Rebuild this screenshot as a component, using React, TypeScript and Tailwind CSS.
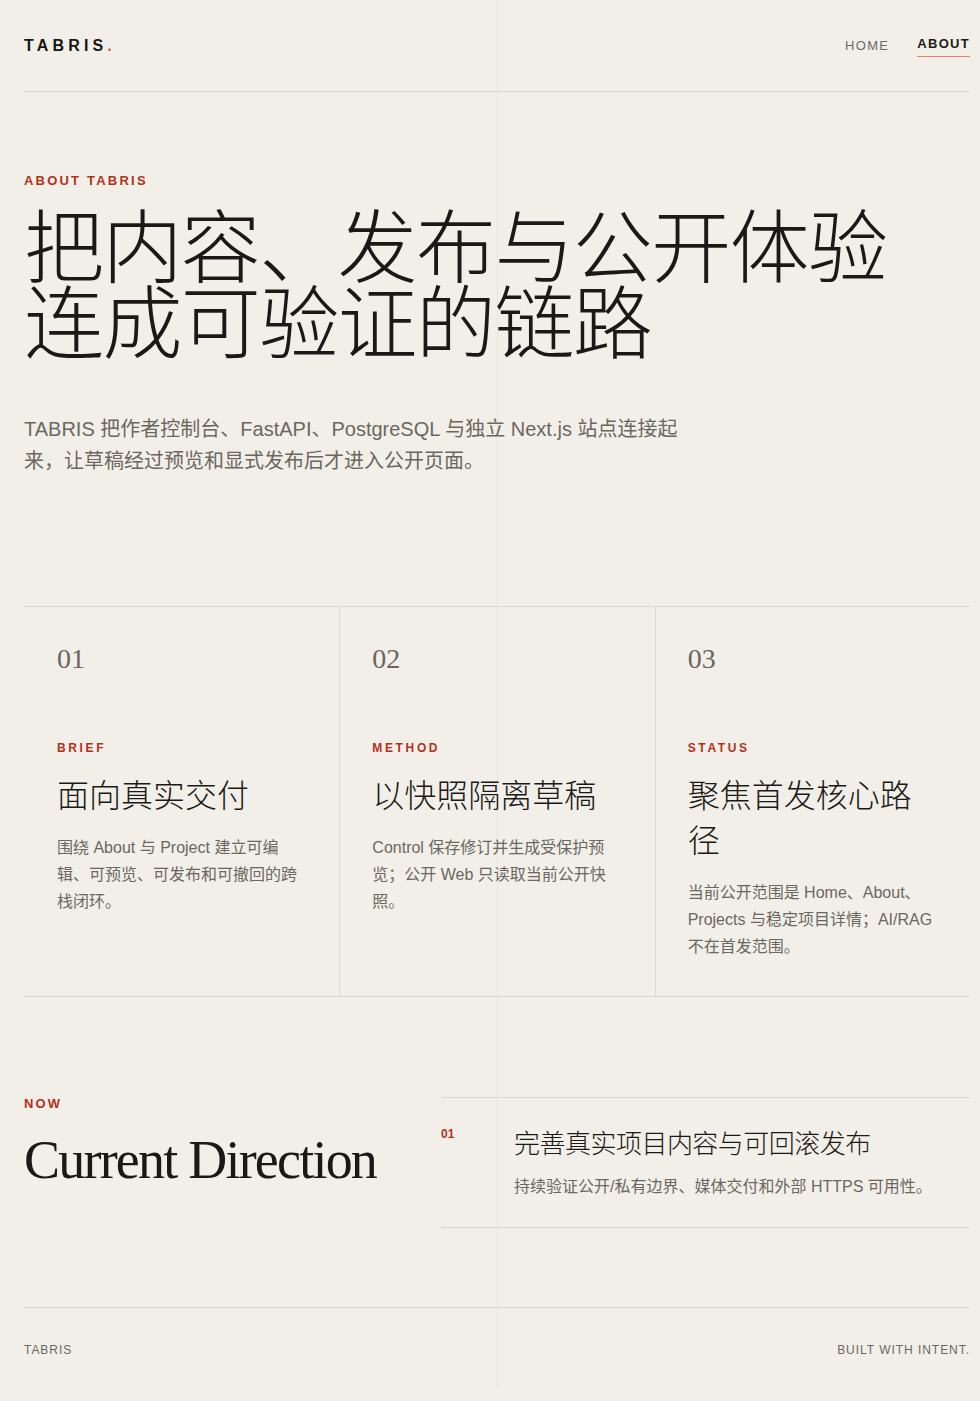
const sans = "font-['Liberation_Sans','Noto_Sans_CJK_SC',sans-serif]";
const serif = "font-['Liberation_Serif','Noto_Sans_CJK_SC',serif]";

type Pillar = { no: string; label: string; title: string; body: string };

const pillars: Pillar[] = [
  {
    no: '01',
    label: 'BRIEF',
    title: '面向真实交付',
    body: '围绕 About 与 Project 建立可编辑、可预览、可发布和可撤回的跨栈闭环。',
  },
  {
    no: '02',
    label: 'METHOD',
    title: '以快照隔离草稿',
    body: 'Control 保存修订并生成受保护预览；公开 Web 只读取当前公开快照。',
  },
  {
    no: '03',
    label: 'STATUS',
    title: '聚焦首发核心路径',
    body: '当前公开范围是 Home、About、Projects 与稳定项目详情；AI/RAG 不在首发范围。',
  },
];

function Header() {
  return (
    <header className="flex h-[92px] items-center justify-between border-b border-[#dcd8d0]">
      <a className="text-[16px] font-bold tracking-[0.26em] text-[#161513]">
        TABRIS<span className="text-[#e4583e]">.</span>
      </a>
      <nav className="flex items-center gap-7 text-[13px] font-medium tracking-[0.1em]">
        <a className="text-[#6d6963]">HOME</a>
        <a className="border-b-[1.5px] border-[#e8836b] pb-[2px] font-semibold text-[#1c1b19]">ABOUT</a>
      </nav>
    </header>
  );
}

function Hero() {
  return (
    <section className="pt-[82px]">
      <p className="text-[13px] leading-none font-bold tracking-[0.17em] text-[#b3311c]">ABOUT TABRIS</p>
      <h1 className={`${serif} mt-[24px] text-[80px] leading-[76px] font-light tracking-[-0.02em] text-[#1a1917]`}>
        把内容、发布与公开体验
        <br />
        连成可验证的链路
      </h1>
      <p className="mt-[50px] max-w-[664px] text-[20px] leading-[32px] text-[#6b6760]">
        TABRIS 把作者控制台、FastAPI、PostgreSQL 与独立 Next.js 站点连接起来，让草稿经过预览和显式发布后才进入公开页面。
      </p>
    </section>
  );
}

function Pillars() {
  return (
    <section className="mt-[129px] grid grid-cols-3 border-y border-[#dcd8d0]">
      {pillars.map((p, i) => (
        <div
          key={p.no}
          className={`border-l px-8 pt-[38px] pb-[36px] ${i === 0 ? 'border-transparent' : 'border-[#dcd8d0]'}`}
        >
          <div className={`${serif} text-[28px] leading-none text-[#6b645d]`}>{p.no}</div>
          <p className="mt-[69px] text-[12px] leading-none font-bold tracking-[0.22em] text-[#b3311c]">{p.label}</p>
          <h3 className={`${serif} mt-5 text-[32px] leading-[45px] font-light text-[#1a1917]`}>{p.title}</h3>
          <p className="mt-[15px] text-[16px] leading-[27px] text-[#6b6760]">{p.body}</p>
        </div>
      ))}
    </section>
  );
}

function Direction() {
  return (
    <section className="mt-[100px] grid grid-cols-[417px_1fr] items-start">
      <div>
        <p className="text-[13px] leading-none font-bold tracking-[0.16em] text-[#b3311c]">NOW</p>
        <h2 className={`${serif} mt-[21px] text-[54px] leading-[1.1] tracking-[-0.033em] text-[#1a1917]`}>
          Current Direction
        </h2>
      </div>
      <ol className="border-y border-[#dcd8d0]">
        <li className="grid grid-cols-[73px_1fr] pt-[29px] pb-[27px]">
          <span className="pt-[1px] text-[12px] leading-none font-bold text-[#b3311c]">01</span>
          <div>
            <h3 className={`${serif} text-[26px] leading-[36px] font-light tracking-[-0.02em] text-[#1a1917]`}>
              完善真实项目内容与可回滚发布
            </h3>
            <p className="mt-[10px] text-[16px] leading-[27px] text-[#6b6760]">
              持续验证公开/私有边界、媒体交付和外部 HTTPS 可用性。
            </p>
          </div>
        </li>
      </ol>
    </section>
  );
}

function Footer() {
  return (
    <footer className="mt-[79px] flex items-center justify-between border-t border-[#dcd8d0] pt-[34px] pb-[32px] text-[12px] leading-[16px] tracking-[0.08em] text-[#6b6760]">
      <span>TABRIS</span>
      <span>BUILT WITH INTENT.</span>
    </footer>
  );
}

export default function App() {
  return (
    <div className={`${sans} min-h-screen bg-[#f2efe9] pb-[11px] pl-6 pr-[10px]`}>
      <div className="relative">
        {/* faint centre guide behind the page */}
        <div className="pointer-events-none absolute inset-y-0 left-1/2 w-px bg-[#e9e5de]" />
        <div className="relative">
          <Header />
          <Hero />
          <Pillars />
          <Direction />
          <Footer />
        </div>
      </div>
    </div>
  );
}
